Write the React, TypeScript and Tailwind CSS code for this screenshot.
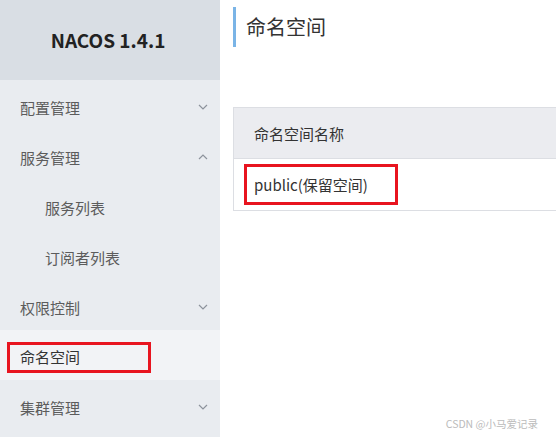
const MENU = [
  { label: "配置管理", chevron: "down" },
  { label: "服务管理", chevron: "up" },
  { label: "服务列表", sub: true },
  { label: "订阅者列表", sub: true },
  { label: "权限控制", chevron: "down" },
  { label: "命名空间", active: true },
  { label: "集群管理", chevron: "down" },
] as const;

type MenuItem = {
  label: string;
  chevron?: "up" | "down";
  sub?: boolean;
  active?: boolean;
};

function Chevron({ dir }: { dir: "up" | "down" }) {
  return (
    <svg
      width="10"
      height="6"
      viewBox="0 0 10 6"
      className="text-[#8d939c]"
      fill="none"
      stroke="currentColor"
      strokeWidth="1.2"
    >
      {dir === "down" ? (
        <path d="M1 1l4 4 4-4" />
      ) : (
        <path d="M1 5l4-4 4 4" />
      )}
    </svg>
  );
}

function SideItem({ item }: { item: MenuItem }) {
  if (item.active) {
    return (
      <li className="flex h-[50px] items-center bg-[#f2f3f6] pt-[4px]">
        <div className="ml-[7px] flex h-[31px] w-[144px] items-center border-[3px] border-[#e8141f] pl-[10px] text-[#333]">
          {item.label}
        </div>
      </li>
    );
  }

  return (
    <li
      className={`flex h-[50px] items-center justify-between pt-[6px] pr-[12px] text-[#5c5c5c] ${
        item.sub ? "pl-[45px]" : "pl-[20px]"
      }`}
    >
      <span>{item.label}</span>
      {item.chevron ? (
        <span className="-mt-[3px]">
          <Chevron dir={item.chevron} />
        </span>
      ) : null}
    </li>
  );
}

export default function App() {
  return (
    <div
      className="relative flex h-[437px] w-[556px] overflow-hidden bg-white text-[15px]"
      style={{ fontFamily: '"Noto Sans CJK SC", "Noto Sans", sans-serif' }}
    >
      <aside className="flex w-[220px] shrink-0 flex-col bg-[#e9ecf0]">
        <div className="flex h-[80px] items-center justify-center bg-[#d9dee4] pr-[4px] text-[19px] font-bold text-[#222]">
          NACOS 1.4.1
        </div>
        <ul>
          {MENU.map((item) => (
            <SideItem key={item.label} item={item as MenuItem} />
          ))}
        </ul>
      </aside>

      <main className="min-w-0 flex-1 pl-[13px]">
        <div className="mt-[7px] flex h-[40px] items-center border-l-[3px] border-[#7ab4e6] pl-[10px] text-[20px] text-[#333]">
          命名空间
        </div>

        <div className="mt-[60px] w-[340px] border border-[#dcdee3] text-[#333]">
          <div className="flex h-[51px] items-center border-b border-[#dcdee3] bg-[#ebecf0] pl-[20px] pt-[2px]">
            命名空间名称
          </div>
          <div className="h-[51px] pl-[10px] pt-[5px]">
            <div className="flex h-[41px] w-[154px] items-center border-[3px] border-[#e8141f] pl-[7px] pt-[1px]">
              public(保留空间)
            </div>
          </div>
        </div>
      </main>

      <div className="absolute bottom-[5px] right-[18px] text-[10.5px] text-[#bbbbbb]">
        CSDN @小马爱记录
      </div>
    </div>
  );
}
